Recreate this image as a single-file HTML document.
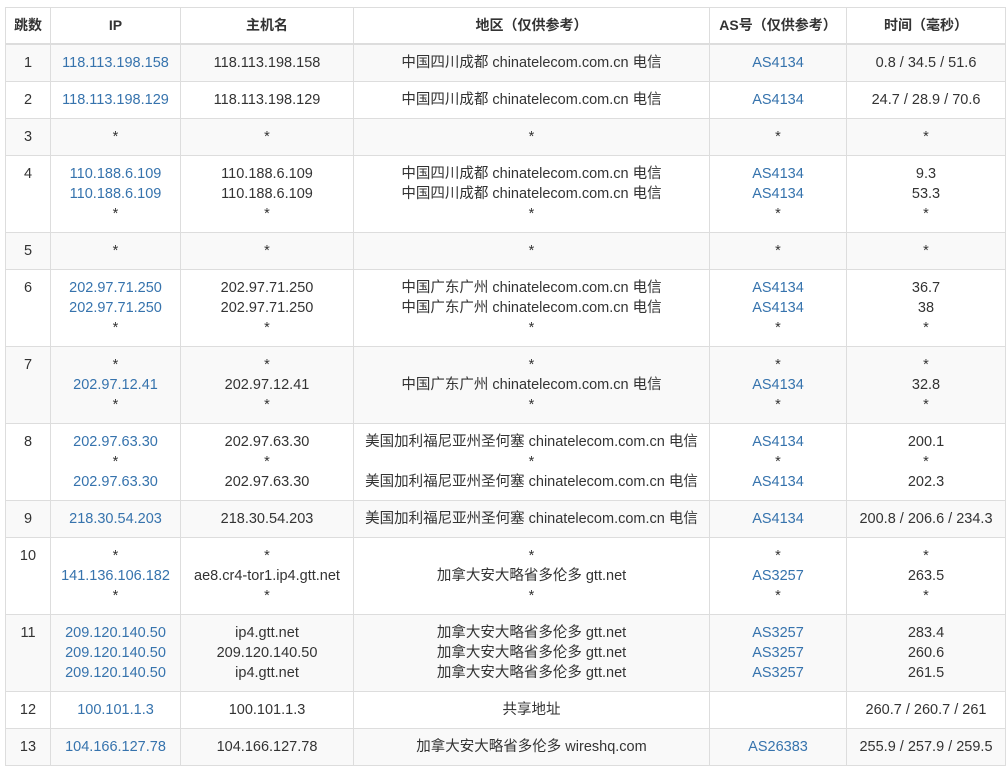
<!DOCTYPE html>
<html><head><meta charset="utf-8"><style>
body{margin:0;background:#fff;font-family:"Liberation Sans","Noto Sans CJK SC",sans-serif;font-size:14.5px;color:#333;}
table{position:absolute;left:5px;top:7px;border-collapse:collapse;table-layout:fixed;width:1000px;}
td,th{border:1px solid #ddd;padding:8px 0;line-height:20px;text-align:center;vertical-align:top;white-space:nowrap;}
th{font-weight:bold;font-size:14px;border-bottom:2px solid #ddd;padding:7px 0 8px;}
tbody tr:nth-child(odd) td{background:#f9f9f9;}
a{color:#3673ad;text-decoration:none;}
</style></head><body>
<table>
<colgroup><col style="width:45px"><col style="width:130px"><col style="width:173px"><col style="width:356px"><col style="width:137px"><col style="width:159px"></colgroup>
<thead><tr><th>跳数</th><th>IP</th><th>主机名</th><th>地区（仅供参考）</th><th>AS号（仅供参考）</th><th>时间（毫秒）</th></tr></thead>
<tbody>
<tr><td>1</td><td><a>118.113.198.158</a></td><td>118.113.198.158</td><td>中国四川成都 chinatelecom.com.cn 电信</td><td><a>AS4134</a></td><td>0.8 / 34.5 / 51.6</td></tr>
<tr><td>2</td><td><a>118.113.198.129</a></td><td>118.113.198.129</td><td>中国四川成都 chinatelecom.com.cn 电信</td><td><a>AS4134</a></td><td>24.7 / 28.9 / 70.6</td></tr>
<tr><td>3</td><td>*</td><td>*</td><td>*</td><td>*</td><td>*</td></tr>
<tr><td>4</td><td><a>110.188.6.109</a><br><a>110.188.6.109</a><br>*</td><td>110.188.6.109<br>110.188.6.109<br>*</td><td>中国四川成都 chinatelecom.com.cn 电信<br>中国四川成都 chinatelecom.com.cn 电信<br>*</td><td><a>AS4134</a><br><a>AS4134</a><br>*</td><td>9.3<br>53.3<br>*</td></tr>
<tr><td>5</td><td>*</td><td>*</td><td>*</td><td>*</td><td>*</td></tr>
<tr><td>6</td><td><a>202.97.71.250</a><br><a>202.97.71.250</a><br>*</td><td>202.97.71.250<br>202.97.71.250<br>*</td><td>中国广东广州 chinatelecom.com.cn 电信<br>中国广东广州 chinatelecom.com.cn 电信<br>*</td><td><a>AS4134</a><br><a>AS4134</a><br>*</td><td>36.7<br>38<br>*</td></tr>
<tr><td>7</td><td>*<br><a>202.97.12.41</a><br>*</td><td>*<br>202.97.12.41<br>*</td><td>*<br>中国广东广州 chinatelecom.com.cn 电信<br>*</td><td>*<br><a>AS4134</a><br>*</td><td>*<br>32.8<br>*</td></tr>
<tr><td>8</td><td><a>202.97.63.30</a><br>*<br><a>202.97.63.30</a></td><td>202.97.63.30<br>*<br>202.97.63.30</td><td>美国加利福尼亚州圣何塞 chinatelecom.com.cn 电信<br>*<br>美国加利福尼亚州圣何塞 chinatelecom.com.cn 电信</td><td><a>AS4134</a><br>*<br><a>AS4134</a></td><td>200.1<br>*<br>202.3</td></tr>
<tr><td>9</td><td><a>218.30.54.203</a></td><td>218.30.54.203</td><td>美国加利福尼亚州圣何塞 chinatelecom.com.cn 电信</td><td><a>AS4134</a></td><td>200.8 / 206.6 / 234.3</td></tr>
<tr><td>10</td><td>*<br><a>141.136.106.182</a><br>*</td><td>*<br>ae8.cr4-tor1.ip4.gtt.net<br>*</td><td>*<br>加拿大安大略省多伦多 gtt.net<br>*</td><td>*<br><a>AS3257</a><br>*</td><td>*<br>263.5<br>*</td></tr>
<tr><td>11</td><td><a>209.120.140.50</a><br><a>209.120.140.50</a><br><a>209.120.140.50</a></td><td>ip4.gtt.net<br>209.120.140.50<br>ip4.gtt.net</td><td>加拿大安大略省多伦多 gtt.net<br>加拿大安大略省多伦多 gtt.net<br>加拿大安大略省多伦多 gtt.net</td><td><a>AS3257</a><br><a>AS3257</a><br><a>AS3257</a></td><td>283.4<br>260.6<br>261.5</td></tr>
<tr><td>12</td><td><a>100.101.1.3</a></td><td>100.101.1.3</td><td>共享地址</td><td></td><td>260.7 / 260.7 / 261</td></tr>
<tr><td>13</td><td><a>104.166.127.78</a></td><td>104.166.127.78</td><td>加拿大安大略省多伦多 wireshq.com</td><td><a>AS26383</a></td><td>255.9 / 257.9 / 259.5</td></tr>
</tbody></table>
</body></html>
